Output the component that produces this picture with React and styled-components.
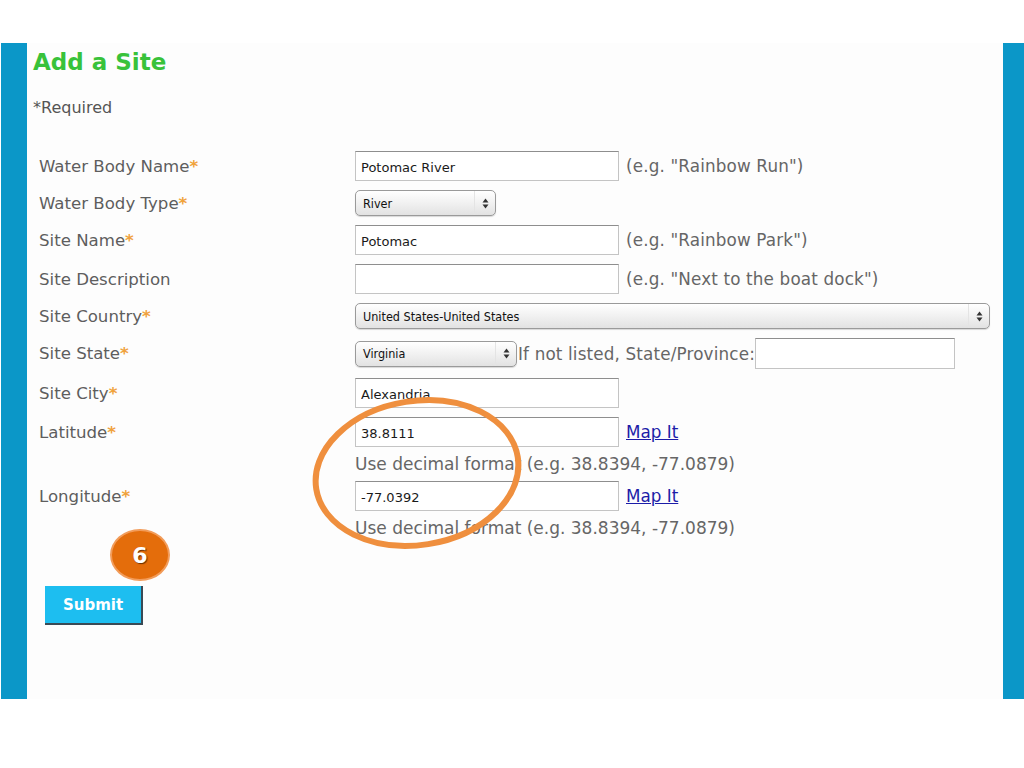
import React from "react";
import styled, { createGlobalStyle } from "styled-components";

const GlobalStyle = createGlobalStyle`
  html, body {
    margin: 0;
    padding: 0;
    background: #ffffff;
  }
  body {
    font-family: "DejaVu Sans", Verdana, sans-serif;
  }
`;

const fields = [
  { label: "Water Body Name", req: true, kind: "input", value: "Potomac River", hint: '(e.g. "Rainbow Run")' },
  { label: "Water Body Type", req: true, kind: "select", value: "River", width: 141 },
  { label: "Site Name", req: true, kind: "input", value: "Potomac", hint: '(e.g. "Rainbow Park")' },
  { label: "Site Description", kind: "input", value: "", hint: '(e.g. "Next to the boat dock")' },
  { label: "Site Country", req: true, kind: "select", value: "United States-United States", width: 635 },
  { label: "Site State", req: true, kind: "state" },
  { label: "Site City", req: true, kind: "input", value: "Alexandria" },
  { label: "Latitude", req: true, kind: "coord", value: "38.8111" },
  { label: "Longitude", req: true, kind: "coord", value: "-77.0392" },
];

const ArrowIcon = () => (
  <svg width="7" height="11" viewBox="0 0 7 11">
    <path d="M3.5 0.5 L6.5 4.5 L0.5 4.5 Z" fill="#333" />
    <path d="M3.5 10.5 L6.5 6.5 L0.5 6.5 Z" fill="#333" />
  </svg>
);

const Select = ({ value, width }) => (
  <SelectBox $w={width}>
    <SelectText>{value}</SelectText>
    <SelectArrow>
      <ArrowIcon />
    </SelectArrow>
  </SelectBox>
);

const Control = ({ f }) => {
  if (f.kind === "select") return <Select value={f.value} width={f.width} />;
  if (f.kind === "state")
    return (
      <Inline>
        <Select value="Virginia" width={162} />
        <Hint $tight>If not listed, State/Province:</Hint>
        <TextInput $w={200} $h={31} readOnly value="" />
      </Inline>
    );
  return (
    <Inline>
      <TextInput $w={264} readOnly value={f.value} />
      {f.hint && <Hint>{f.hint}</Hint>}
      {f.kind === "coord" && <MapLink href="#">Map It</MapLink>}
    </Inline>
  );
};

export default function App() {
  return (
    <>
      <GlobalStyle />
      <Frame>
        <Title>Add a Site</Title>
        <Required>*Required</Required>
        <Form>
          {fields.map((f) => (
            <React.Fragment key={f.label}>
              <Label>
                {f.label}
                {f.req && <Star>*</Star>}
              </Label>
              <Control f={f} />
              {f.kind === "coord" && (
                <>
                  <span />
                  <FormatNote>Use decimal format (e.g. 38.8394, -77.0879)</FormatNote>
                </>
              )}
            </React.Fragment>
          ))}
        </Form>
        <SubmitButton>Submit</SubmitButton>

        <Badge>6</Badge>
        <Circle width="220" height="160" viewBox="0 0 220 160">
          <ellipse
            cx="110"
            cy="80"
            rx="102"
            ry="72"
            fill="none"
            stroke="#ef8f3e"
            strokeWidth="6"
            transform="rotate(-9 110 80)"
          />
        </Circle>
      </Frame>
    </>
  );
}

const Frame = styled.div`
  position: relative;
  margin: 43px 0 0 1px;
  height: 656px;
  box-sizing: border-box;
  border-left: 26px solid #0b97c8;
  border-right: 21px solid #0b97c8;
  background: #fdfdfd;
  padding: 5px 0 0 6px;
`;

const Title = styled.h1`
  margin: 0;
  font-size: 23px;
  line-height: 28px;
  font-weight: bold;
  color: #38c23a;
`;

const Required = styled.div`
  margin-top: 22px;
  font-size: 16px;
  line-height: 20px;
  color: #555;
`;

const Form = styled.div`
  display: grid;
  grid-template-columns: 316px 1fr;
  align-items: center;
  row-gap: 9px;
  margin: 33px 0 0 6px;
`;

const Label = styled.div`
  font-size: 16.6px;
  color: #5e5e5e;
  white-space: nowrap;
`;

const Star = styled.span`
  color: #f0a23c;
  font-weight: bold;
`;

const Inline = styled.div`
  display: flex;
  align-items: center;
`;

const TextInput = styled.input`
  box-sizing: border-box;
  width: ${(p) => p.$w}px;
  height: ${(p) => p.$h || 30}px;
  padding: 2px 5px 0;
  border: 1px solid #c4c4c4;
  border-top-color: #8e8e8e;
  background: #fff;
  font-family: "DejaVu Sans", sans-serif;
  font-size: 13px;
  color: #1a1a1a;
  outline: none;
`;

const Hint = styled.span`
  margin-left: ${(p) => (p.$tight ? 1 : 7)}px;
  font-size: 16.8px;
  letter-spacing: 0.15px;
  color: #666;
  white-space: nowrap;
`;

const MapLink = styled.a`
  margin-left: 7px;
  font-size: 16.8px;
  color: #1c1ca8;
  text-decoration: underline;
`;

const FormatNote = styled.div`
  margin: -2px 0 -2px;
  font-size: 17px;
  color: #666;
  white-space: nowrap;
`;

const SelectBox = styled.div`
  box-sizing: border-box;
  display: flex;
  align-items: center;
  width: ${(p) => p.$w}px;
  height: 26px;
  border: 1px solid #9a9a9a;
  border-radius: 5px;
  background: linear-gradient(#ffffff, #f1f1f1 50%, #e2e2e2);
  box-shadow: 0 1px 1px rgba(0, 0, 0, 0.15);
`;

const SelectText = styled.span`
  flex: 1;
  padding-left: 7px;
  font-family: "DejaVu Sans Condensed", "DejaVu Sans", sans-serif;
  font-stretch: condensed;
  font-size: 12.5px;
  color: #111;
  white-space: nowrap;
  overflow: hidden;
`;

const SelectArrow = styled.span`
  display: flex;
  align-items: center;
  justify-content: center;
  width: 20px;
  height: 100%;
  border-left: 1px solid #e4e4e4;
`;

const SubmitButton = styled.button`
  display: block;
  margin: 50px 0 0 12px;
  width: 98px;
  height: 39px;
  background: #1dbef0;
  border: none;
  border-right: 2px solid #3a4a55;
  border-bottom: 2px solid #3a4a55;
  color: #ffffff;
  font-family: "DejaVu Sans", sans-serif;
  font-weight: bold;
  font-size: 15px;
  cursor: pointer;
`;

const Badge = styled.div`
  position: absolute;
  left: 83px;
  top: 486px;
  width: 60px;
  height: 52px;
  box-sizing: border-box;
  border-radius: 50%;
  background: #e46d0b;
  border: 2px solid #f29c5a;
  display: flex;
  align-items: center;
  justify-content: center;
  color: #ffffff;
  font-weight: bold;
  font-size: 22px;
  text-shadow: 1px 1px 1px #6b3000;
`;

const Circle = styled.svg`
  position: absolute;
  left: 280px;
  top: 350px;
  pointer-events: none;
`;
